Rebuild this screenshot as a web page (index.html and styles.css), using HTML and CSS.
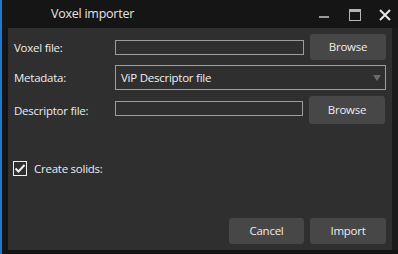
FILE: index.html
```html
<!DOCTYPE html>
<html lang="en">
<head>
    <meta charset="UTF-8">
    <title>Voxel importer</title>
    <link rel="stylesheet" href="styles.css">
</head>
<body>
    <div class="window">
        <div class="titlebar">
            <span class="title">Voxel importer</span>
            <div class="controls">
                <span class="ctl ctl-min"></span>
                <span class="ctl ctl-max"></span>
                <svg class="ctl-close" width="12" height="12" viewBox="0 0 12 12">
                    <path d="M1 1 L11 11 M11 1 L1 11" stroke="#e6e6e6" stroke-width="2"/>
                </svg>
            </div>
        </div>

        <div class="panel">
            <div class="form">
                <div class="row row-file">
                    <label>Voxel file:</label>
                    <input type="text" class="field">
                    <button class="btn">Browse</button>
                </div>
                <div class="row row-meta">
                    <label>Metadata:</label>
                    <div class="select">
                        <span>ViP Descriptor file</span>
                        <span class="arrow"></span>
                    </div>
                </div>
                <div class="row row-desc">
                    <label>Descriptor file:</label>
                    <input type="text" class="field">
                    <button class="btn">Browse</button>
                </div>
            </div>

            <div class="check">
                <span class="box">
                    <svg width="12" height="11" viewBox="0 0 12 11">
                        <path d="M1.5 5.5 L4.5 8.5 L10.5 2" stroke="#f0f0f0" stroke-width="2" fill="none"/>
                    </svg>
                </span>
                <span>Create solids:</span>
            </div>

            <div class="actions">
                <button class="btn">Cancel</button>
                <button class="btn">Import</button>
            </div>
        </div>
    </div>
</body>
</html>
```

FILE: styles.css
```css
body {
    margin: 0;
    background-color: #141414;
    font-family: "Open Sans", "Noto Sans", sans-serif;
    font-size: 11.5px;
    letter-spacing: -0.25px;
    color: #ececec;
}
.window {
    width: 396px;
    height: 254px;
    border-left: 2px solid #1c7bc8;
    background-color: #141414;
    display: flex;
    flex-direction: column;
}
.titlebar {
    height: 28px;
    display: flex;
    align-items: center;
    background-color: #151515;
}
.title {
    margin-left: 49px;
    font-size: 12.5px;
    color: #e4e4e4;
    margin-top: -2px;
}
.controls {
    margin-left: auto;
    display: flex;
    align-items: center;
    height: 28px;
}
.ctl-min {
    width: 10px;
    height: 2px;
    background-color: #9a9a9a;
    margin-top: 6px;
}
.ctl-max {
    box-sizing: border-box;
    width: 12px;
    height: 12px;
    border: 1px solid #b4b4b4;
    border-top-width: 3px;
    margin-left: 20px;
    margin-top: 1px;
}
.ctl-close {
    margin-left: 18px;
    margin-right: 7px;
    margin-top: 1px;
}
.panel {
    flex: 1;
    margin: 0 6px 4px 6px;
    background-color: #2f2f2f;
    padding: 6px;
    display: flex;
    flex-direction: column;
    box-shadow: 6px 0 0 #1b1b1b;
}
.row {
    display: flex;
    align-items: center;
}
.row label {
    width: 101px;
}
.row-file {
    height: 26px;
}
.row-meta {
    height: 25px;
    margin-top: 5px;
}
.row-desc {
    height: 28px;
    margin-top: 6px;
}
.field {
    box-sizing: border-box;
    width: 189px;
    height: 15px;
    border: 1px solid #9c9c9c;
    background-color: #2f2f2f;
    padding: 0;
    margin: 0 6px 0 0;
}
.row-desc .field {
    width: 188px;
    margin-top: -3px;
}
.select {
    box-sizing: border-box;
    width: 271px;
    height: 25px;
    border: 1px solid #9c9c9c;
    display: flex;
    align-items: center;
    padding-left: 5px;
    color: #f0f0f0;
}
.arrow {
    margin-left: auto;
    margin-right: 4px;
    width: 0;
    height: 0;
    border-left: 4px solid transparent;
    border-right: 4px solid transparent;
    border-top: 6px solid #6a6a6a;
}
.btn {
    width: 76px;
    height: 26px;
    border: none;
    border-radius: 3px;
    background-color: #474747;
    color: #ececec;
    font-family: inherit;
    font-size: inherit;
    letter-spacing: inherit;
    padding: 0 0 1px 0;
}
.row-desc .btn {
    height: 28px;
}
.check {
    display: flex;
    align-items: center;
    margin-top: 37px;
    margin-left: -1px;
}
.box {
    box-sizing: border-box;
    width: 14px;
    height: 15px;
    border: 1px solid #f0f0f0;
    display: flex;
    align-items: center;
    justify-content: center;
    margin-right: 7px;
}
.actions {
    margin-top: auto;
    display: flex;
    justify-content: flex-end;
    gap: 6px;
}
.actions .btn {
    width: 75px;
}
.actions .btn:last-child {
    width: 76px;
}
```
